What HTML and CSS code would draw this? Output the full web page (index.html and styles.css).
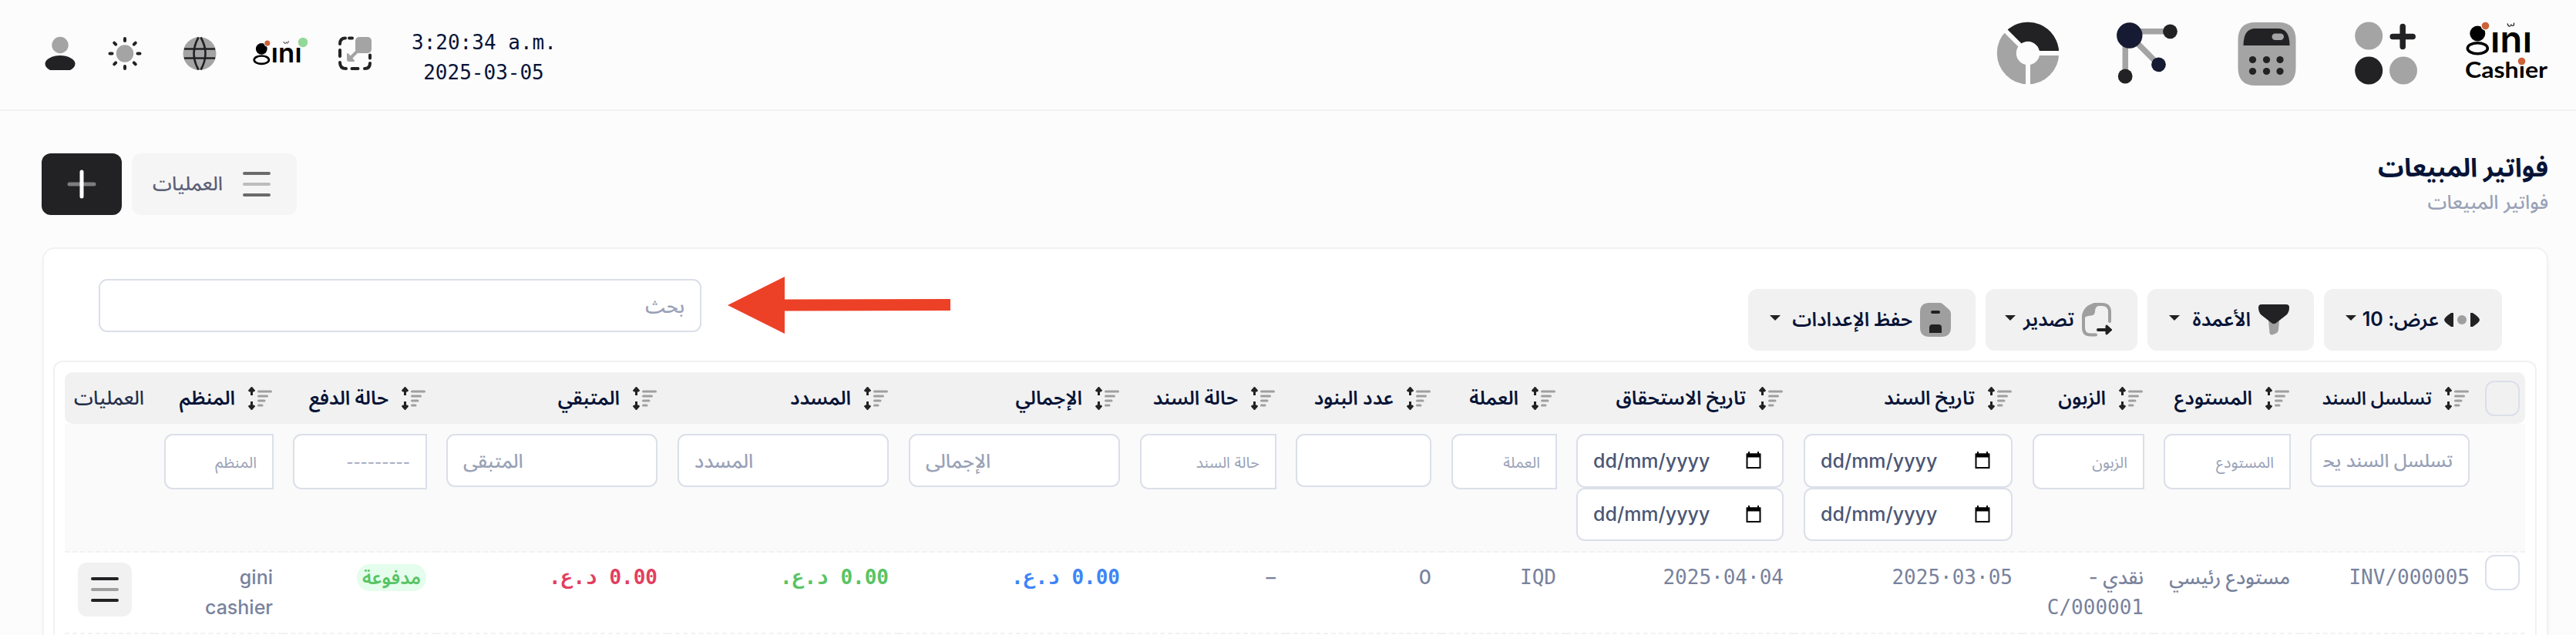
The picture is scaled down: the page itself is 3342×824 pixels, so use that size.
FILE: index.html
```html
<!DOCTYPE html>
<html lang="ar" dir="rtl">
<head>
	<meta charset="utf-8">
	<title>فواتير المبيعات</title>
	<link rel="stylesheet" href="styles.css">
</head>
<body>

<!-- shared icons -->
<svg class="sprite">
	<symbol id="i-sort" viewBox="0 0 32 32">
		<path d="M5 4v8M5 20v8" stroke="#222224" stroke-width="3"/>
		<path d="M5 1L9 5.500Q9 7 7.500 7H2.500Q1 7 1 5.500zM5 31L9 26.500Q9 25 7.500 25H2.500Q1 25 1 26.500z" fill="#222224" stroke="#222224"/>
		<path d="M14 7h16M14 13h11M14 19h7.500M14 25h4.500" stroke="#9f9f9f" stroke-width="3" stroke-linecap="round"/>
	</symbol>
	<symbol id="i-menu" viewBox="0 0 36 32">
		<path d="M2 2h32M2 30h32" stroke="#222224" stroke-width="4" stroke-linecap="round"/>
		<path d="M2 16h32" stroke="#9f9f9f" stroke-width="4" stroke-linecap="round"/>
	</symbol>
	<symbol id="i-date" viewBox="0 0 20 23">
		<path d="M1.500 3.500h17v17.500h-17z" fill="none" stroke="#000" stroke-width="2"/>
		<path d="M1 2.500h18v5H1zM3 0h2v3H3zM15 0h2v3h-2z" fill="#000"/>
	</symbol>
	<symbol id="i-gini" viewBox="0 0 107 48">
		<circle cx="15.300" cy="15.500" r="10"/>
		<circle cx="25.500" cy="5.500" r="6" fill="#fcfcfc"/>
		<circle cx="25.500" cy="5.500" r="4.800" fill="#cd6238"/>
		<ellipse cx="15.300" cy="34.700" rx="13" ry="7" fill="none" stroke="#000" stroke-width="3.600"/>
		<path d="M54 2.500q1 4 3.500 3.500q1.500-.5 1-2.500q.5 2 2.500 2q2-.500 1.500-4" fill="none" stroke="#222" stroke-width="1.200"/>
		<text class="gini-txt" x="32" y="39.500" textLength="54">ını</text>
	</symbol>
</svg>

<header class="topbar">
	<div class="topbar__nav">
		<svg class="brand" width="107" height="82" viewBox="0 0 107 82">
			<use href="#i-gini" width="107" height="48"/>
			<text class="brand__txt" x="-1" y="73" textLength="107" lengthAdjust="spacingAndGlyphs">Cashıer</text>
			<circle cx="72.500" cy="51.500" r="4.800" fill="#cd6238"/>
		</svg>
		<svg width="82" height="82" viewBox="0 0 82 82">
			<circle cx="18.200" cy="18.500" r="18" fill="#a4a4a4"/>
			<circle cx="18.200" cy="63.500" r="18" fill="#222224"/>
			<circle cx="63" cy="63.500" r="18" fill="#a4a4a4"/>
			<path d="M62.200 6.500v26M49.200 19.500h26" stroke="#222224" stroke-width="7.500" stroke-linecap="round"/>
		</svg>
		<svg width="82" height="84" viewBox="0 0 82 84">
			<path d="M3.500 24Q3.500 1 26 1h30q22.500 0 22.500 23v36q0 23-22.500 23H26Q3.500 83 3.500 60z" fill="#a4a4a4"/>
			<path d="M10.500 31Q10.500 9 26 9h29q15.500 0 15.500 22z" fill="#222224"/>
			<rect x="47.500" y="15.500" width="15.500" height="8.500" rx="4.200" fill="#a4a4a4"/>
			<g fill="#222224">
				<circle cx="22.500" cy="49.500" r="4.600"/><circle cx="40.500" cy="49.500" r="4.600"/><circle cx="58" cy="49.500" r="4.600"/>
				<circle cx="22.500" cy="64.500" r="4.600"/><circle cx="40.500" cy="64.500" r="4.600"/><circle cx="58" cy="64.500" r="4.600"/>
			</g>
		</svg>
		<svg width="82" height="82" viewBox="0 0 82 82">
			<path d="M17.800 12.800H70M12.300 18v53M17.800 18l37.700 37.800" stroke="#a4a4a4" stroke-width="7.500"/>
			<circle cx="17.800" cy="18" r="16.700" fill="#161b33"/>
			<circle cx="70.500" cy="12.800" r="9.400" fill="#222224"/>
			<circle cx="55.500" cy="55.800" r="9.400" fill="#161b33"/>
			<circle cx="12.200" cy="71" r="9.400" fill="#222224"/>
		</svg>
		<svg width="82" height="82" viewBox="0 0 82 82">
			<circle cx="41" cy="41" r="27.700" fill="none" stroke="#a4a4a4" stroke-width="25"/>
			<path d="M21.400 21.400A27.700 27.700 0 0 1 68.700 41" fill="none" stroke="#222224" stroke-width="25"/>
			<path d="M41 41L9 9M41 41h41M41 41v41" stroke="#fcfcfc" stroke-width="6"/>
		</svg>
	</div>

	<div class="topbar__tools">
		<div class="clock">
			<div dir="ltr">3:20:34 a.m.</div>
			<div dir="ltr">2025-03-05</div>
		</div>
		<svg class="tool-scan" width="44" height="44" viewBox="0 0 44 44">
			<path d="M2 10Q2 2.500 9 2.500M14 2.500h4M2 18v8M2 34q0 8 8 8M17.500 42h8M34 42q7 0 7-7M41 24.500v4" fill="none" stroke="#222224" stroke-width="4" stroke-linecap="round"/>
			<rect x="22" y="1" width="21" height="21" rx="5" fill="#a4a4a4"/>
			<path d="M25 19l-9 9" stroke="#a4a4a4" stroke-width="4"/>
			<path d="M12 23v7q0 2 2 2h6z" fill="#a4a4a4" stroke="#a4a4a4" stroke-width="2" stroke-linejoin="round"/>
		</svg>
		<svg class="tool-gini" width="74" height="44" viewBox="0 0 74 44">
			<use href="#i-gini" x="1" y="5" width="79" height="35.500"/>
			<circle cx="66" cy="8" r="6.200" fill="#92d896"/>
		</svg>
		<svg class="tool-lang" width="44" height="44" viewBox="0 0 44 44">
			<circle cx="22" cy="22.500" r="21.500" fill="#a4a4a4"/>
			<path d="M2 16.500h40M2 28.500h40" stroke="#222224" stroke-width="2.400"/>
			<path d="M20.500 1.500q-12 21 0 42M23.500 1.500q12 21 0 42" fill="none" stroke="#222224" stroke-width="2.600"/>
		</svg>
		<svg class="tool-theme" width="44" height="44" viewBox="0 0 44 44">
			<circle cx="22" cy="22.500" r="11.200" fill="#a4a4a4"/>
			<path d="M22 3v3M22 39v3M2.500 22.500h3M38.500 22.500h3M8.200 8.700l2 2M33.800 34.300l2 2M8.200 36.300l2-2M33.800 10.700l2-2" stroke="#222224" stroke-width="4" stroke-linecap="round"/>
		</svg>
		<svg width="44" height="44" viewBox="0 0 44 44">
			<circle cx="22" cy="11.500" r="10.700" fill="#a4a4a4"/>
			<path d="M9 44Q2.500 41 2.500 35.500C2.500 30 12 25 22 25s19.500 5 19.500 10.500Q41.500 41 35 44z" fill="#222224"/>
		</svg>
	</div>
</header>

<main class="page">
	<div class="page-head">
		<div class="page-head__titles">
			<h1>فواتير المبيعات</h1>
			<div class="page-head__crumb">فواتير المبيعات</div>
		</div>
		<div class="page-head__actions">
			<a class="btn-ops">
				<svg width="36" height="32"><use href="#i-menu"/></svg>
				<span>العمليات</span>
			</a>
			<a class="btn-add">
				<svg width="38" height="38" viewBox="0 0 38 38">
					<path d="M3 19h32" stroke="#7d7d7e" stroke-width="5" stroke-linecap="round"/>
					<path d="M19 3v32" stroke="#fff" stroke-width="5" stroke-linecap="round"/>
				</svg>
			</a>
		</div>
	</div>

	<section class="card">
		<div class="toolbar">
			<div class="toolbar__buttons">
				<button class="tbtn tbtn_show">
					<svg width="46" height="20" viewBox="0 0 46 20">
						<path d="M12 1v18H9Q0 13 0 10T9 1zM34 1v18h3q9-6 9-9t-9-9z" fill="#222224"/>
						<circle cx="23" cy="10" r="6" fill="#9f9f9f"/>
					</svg>
					<span>عرض: 10</span>
					<i class="caret"></i>
				</button>
				<button class="tbtn tbtn_columns">
					<svg width="40" height="42" viewBox="0 0 40 42">
						<path d="M13 22h14l-1 12q-.500 3-3 4.500l-5 2q-3 .500-3.500-2.500z" fill="#9f9f9f"/>
						<path d="M4 1h32q4 0 4 4 0 6-3.500 9.500L23 25q-3 2.500-6 0L3.500 14.500Q0 11 0 5q0-4 4-4z" fill="#222224"/>
					</svg>
					<span>الأعمدة</span>
					<i class="caret"></i>
				</button>
				<button class="tbtn tbtn_export">
					<svg width="40" height="44" viewBox="0 0 40 44">
						<path d="M2 17v15q0 9.500 9 9.500h7M16 2h10q10 0 10 10v12" fill="none" stroke="#9f9f9f" stroke-width="4" stroke-linecap="round"/>
						<path d="M0 17Q2 3 17 0h9l-2 3q-7 1-7 8 0 5-5 5.500Q4 17 3 20z" fill="#9f9f9f"/>
						<path d="M21 35h11" stroke="#222224" stroke-width="4" stroke-linecap="round"/>
						<path d="M31 29.500q1-1 2 0l6 5.500-6 5.500q-1 1-2 0z" fill="#222224" stroke="#222224"/>
					</svg>
					<span>تصدير</span>
					<i class="caret"></i>
				</button>
				<button class="tbtn tbtn_save">
					<svg width="40" height="44" viewBox="0 0 40 44">
						<path d="M12 0h14q2 0 4 2l8 7q2 2 2 5v18q0 12-12 12H12Q0 44 0 32V12Q0 0 12 0z" fill="#9f9f9f"/>
						<rect x="14" y="10" width="12" height="4" rx="2" fill="#222224"/>
						<path d="M12 39v-7q0-4 4-4h8q4 0 4 4v7z" fill="#222224"/>
					</svg>
					<span>حفظ الإعدادات</span>
					<i class="caret"></i>
				</button>
			</div>
			<div class="search">
				<div class="field">بحث</div>
				<svg class="pointer" width="290" height="76" viewBox="0 0 290 76">
					<path d="M0 38L74 1v29.500l215-.500v15l-215 .500V75z" fill="#ec4127"/>
				</svg>
			</div>
		</div>

		<div class="table-box">
			<table class="grid">
				<colgroup>
					<col class="c-check"><col class="c-serial"><col class="c-store"><col class="c-client">
					<col class="c-date"><col class="c-due"><col class="c-cur"><col class="c-items"><col class="c-items">
					<col class="c-money"><col class="c-money"><col class="c-money">
					<col class="c-pay"><col class="c-user"><col class="c-ops">
				</colgroup>
				<tr class="grid__head">
					<th><i class="check"></i></th>
					<th><div class="th th_serial"><svg><use href="#i-sort"/></svg><span>تسلسل السند</span></div></th>
					<th><div class="th"><svg><use href="#i-sort"/></svg><span>المستودع</span></div></th>
					<th><div class="th"><svg><use href="#i-sort"/></svg><span>الزبون</span></div></th>
					<th><div class="th"><svg><use href="#i-sort"/></svg><span>تاريخ السند</span></div></th>
					<th><div class="th"><svg><use href="#i-sort"/></svg><span>تاريخ الاستحقاق</span></div></th>
					<th><div class="th"><svg><use href="#i-sort"/></svg><span>العملة</span></div></th>
					<th><div class="th"><svg><use href="#i-sort"/></svg><span>عدد البنود</span></div></th>
					<th><div class="th"><svg><use href="#i-sort"/></svg><span>حالة السند</span></div></th>
					<th><div class="th"><svg><use href="#i-sort"/></svg><span>الإجمالي</span></div></th>
					<th><div class="th"><svg><use href="#i-sort"/></svg><span>المسدد</span></div></th>
					<th><div class="th"><svg><use href="#i-sort"/></svg><span>المتبقي</span></div></th>
					<th><div class="th"><svg><use href="#i-sort"/></svg><span>حالة الدفع</span></div></th>
					<th><div class="th"><svg><use href="#i-sort"/></svg><span>المنظم</span></div></th>
					<th><div class="th th_plain">العمليات</div></th>
				</tr>
				<tr class="grid__filter">
					<td></td>
					<td><div class="field field_serial">تسلسل السند يح&zwj;</div></td>
					<td><div class="select">المستودع</div></td>
					<td><div class="select">الزبون</div></td>
					<td>
						<div class="field field_date">dd/mm/yyyy<svg><use href="#i-date"/></svg></div>
						<div class="field field_date">dd/mm/yyyy<svg><use href="#i-date"/></svg></div>
					</td>
					<td>
						<div class="field field_date">dd/mm/yyyy<svg><use href="#i-date"/></svg></div>
						<div class="field field_date">dd/mm/yyyy<svg><use href="#i-date"/></svg></div>
					</td>
					<td><div class="select">العملة</div></td>
					<td><div class="field"></div></td>
					<td><div class="select">حالة السند</div></td>
					<td><div class="field field_num">الإجمالى</div></td>
					<td><div class="field field_num">المسدد</div></td>
					<td><div class="field field_num">المتبقى</div></td>
					<td><div class="select">---------</div></td>
					<td><div class="select">المنظم</div></td>
					<td></td>
				</tr>
				<tr class="grid__row">
					<td><i class="check"></i></td>
					<td class="mono">INV/000005</td>
					<td>مستودع رئيسي</td>
					<td>نقدي - <span class="mono">C/000001</span></td>
					<td class="mono"><bdi dir="ltr">2025·03·05</bdi></td>
					<td class="mono"><bdi dir="ltr">2025·04·04</bdi></td>
					<td class="mono">IQD</td>
					<td>0</td>
					<td>–</td>
					<td class="mono money money_blue"><bdi dir="rtl">0.00 د.ع.</bdi></td>
					<td class="mono money money_green"><bdi dir="rtl">0.00 د.ع.</bdi></td>
					<td class="mono money money_red"><bdi dir="rtl">0.00 د.ع.</bdi></td>
					<td><span class="badge">مدفوعة</span></td>
					<td>gini<br>cashier</td>
					<td><a class="row-menu"><svg width="36" height="32"><use href="#i-menu"/></svg></a></td>
				</tr>
			</table>
		</div>
	</section>
</main>

</body>
</html>
```
FILE: styles.css
```css
* {
	box-sizing: border-box;
}

body {
	margin: 0;
	height: 824px;
	overflow: hidden;
	display: flex;
	flex-direction: column;
	color: #071437;
	font-size: 25px;
	font-family: Inter, "Noto Sans Arabic", "DejaVu Sans", sans-serif;
	background-color: #fcfcfc;
}

svg {
	display: block;
	flex: none;
	direction: ltr;
}

.sprite { display: none; }

.gini-txt {
	font: 600 47px Inter, sans-serif;
}


.topbar {
	height: 144px;
	flex: none;
	display: flex;
	justify-content: space-between;
	padding: 0 36px 0 56px;
	border-bottom: 2px solid #f1f1f1;
}
	.topbar__nav {
		display: flex;
		gap: 73px;
		padding-top: 28px;
	}
		.brand { margin-left: -11px; }
		.brand__txt { font: 700 29px Lato, sans-serif; }

	.topbar__tools {
		display: flex;
		padding-top: 47px;
	}
		.clock {
			width: 187px;
			margin: -11px 0 0 51px;
			font: 26px/39px "DejaVu Sans Mono", monospace;
			text-align: center;
			white-space: nowrap;
		}
		.tool-scan { margin-left: 38px; }
		.tool-gini { margin-left: 46px; }
		.tool-lang { margin-left: 53px; }
		.tool-theme { margin-left: 40px; }


.page {
	flex: 1;
	min-height: 0;
	display: flex;
	flex-direction: column;
	padding: 55px 36px 0 54px;
}

.page-head {
	height: 80px;
	flex: none;
	display: flex;
	justify-content: space-between;
	margin-bottom: 42px;
}
	.page-head h1 {
		margin: 0;
		font-size: 33.3px;
		line-height: 37px;
	}
	.page-head__crumb {
		color: #99a1b7;
		font-size: 25px;
		font-weight: 500;
		line-height: 52px;
	}
	.page-head__actions {
		display: flex;
		gap: 13px;
	}

.btn-ops {
	width: 214px;
	display: flex;
	align-items: center;
	gap: 26px;
	padding-right: 34px;
	color: #5b6078;
	font-weight: 500;
	border-radius: 12px;
	background-color: #f5f5f5;
}
	.btn-ops svg { opacity: .65; }

.btn-add {
	width: 104px;
	display: flex;
	align-items: center;
	justify-content: center;
	border-radius: 12px;
	background-color: #222224;
}


.card {
	flex: 1;
	min-height: 0;
	display: flex;
	flex-direction: column;
	margin-left: 1px;
	border: 2px solid #f1f1f1;
	border-bottom: 0;
	border-radius: 16px 16px 0 0;
	background-color: #fff;
	box-shadow: 0 3px 4px rgba(0,0,0,.03);
}

.toolbar {
	flex: none;
	display: flex;
	justify-content: space-between;
	padding: 39px 58px 13px 71px;
}
	.toolbar__buttons {
		display: flex;
		gap: 13px;
		padding-top: 13px;
	}

.tbtn {
	height: 80px;
	display: flex;
	align-items: center;
	gap: 10px;
	padding: 0 32px 0 28px;
	border: 0;
	border-radius: 12px;
	color: #071437;
	font: 600 25px Inter, "Noto Sans Arabic", "DejaVu Sans", sans-serif;
	white-space: nowrap;
	background-color: #f1f1f1;
}
	.tbtn span {
		flex: 1;
		text-align: right;
	}
	.tbtn_show { width: 231px; padding-right: 29px; gap: 7px; }
	.tbtn_columns { width: 216px; }
	.tbtn_export { width: 197px; }
	.tbtn_save { width: 295px; }

.caret {
	margin-top: -6px;
	border: 7px solid transparent;
	border-top-color: #222224;
	border-bottom: 0;
}

.search {
	width: 782px;
	position: relative;
}
	/* arrow lies over the free space beside the search box */
	.pointer {
		top: -4px;
		left: 816px;
		position: absolute;
	}


.field,
.select {
	height: 69px;
	padding: 0 20px;
	border: 2px solid #dbdfe9;
	border-radius: 11px;
	color: #99a1b7;
	font-size: 25px;
	font-weight: 500;
	line-height: 66px;
	white-space: nowrap;
	background-color: #fff;
}
	.field_num { text-align: left; }
	.field_serial { font-size: 24px; }

	.field_date {
		height: 69.5px;
		display: flex;
		justify-content: space-between;
		align-items: center;
		padding-right: 27px;
		direction: ltr;
		color: #4b5675;
	}
		.field_date svg {
			width: 20px;
			height: 23px;
		}

	.select {
		height: 72px;
		margin-right: -1px;
		font-size: 20px;
		font-weight: 400;
		line-height: 70px;
		border-radius: 11px 0 0 11px;
	}


.table-box {
	flex: 1;
	min-height: 0;
	margin: 0 13px 0 12px;
	padding: 13px 13px 0;
	border: 2px solid #f1f1f1;
	border-bottom: 0;
	border-radius: 12px 12px 0 0;
}

.grid {
	width: 3192px;
	table-layout: fixed;
	border-spacing: 0;
}
	.grid td,
	.grid th {
		padding: 13px;
		vertical-align: top;
		text-align: right;
	}

	.c-check { width: 59px; }
	.c-serial { width: 233px; }
	.c-store { width: 190px; }
	.c-client { width: 170px; }
	.c-date { width: 297px; }
	.c-due { width: 295px; }
	.c-cur { width: 162px; }
	.c-items { width: 202px; }
	.c-money { width: 300px; }
	.c-pay { width: 199px; }
	.c-user { width: 167px; }
	.c-ops { width: 116px; }

	.grid__head th {
		height: 67px;
		padding: 0 13px;
		vertical-align: middle;
		background-color: #f1f1f1;
	}
		.grid__head th:first-child { border-radius: 0 10px 10px 0; }
		.grid__head th:last-child { border-radius: 10px 0 0 10px; }

	.th {
		display: flex;
		align-items: center;
		gap: 16px;
		font-size: 25px;
		font-weight: 600;
		line-height: 39px;
		white-space: nowrap;
	}
		.th svg {
			width: 33px;
			height: 32px;
		}
		.th_serial { font-size: 23.7px; }
		.th_plain {
			color: #252f4a;
			font-weight: 500;
		}

	.grid__filter td {
		height: 167px;
		background-color: #fafafa;
		border-bottom: 2px dashed #f1f1f1;
	}

	.grid__row td {
		height: 106px;
		color: #78829d;
		font-weight: 500;
		line-height: 39px;
		border-bottom: 2px dashed #f1f1f1;
	}

	.grid .check {
		width: 45px;
		height: 46px;
		display: block;
		border: 2px solid #dbdfe9;
		border-radius: 12px;
	}
	.grid th:first-child,
	.grid .grid__row td:first-child { padding: 3px 7px; }
	.grid th:first-child { padding: 0 7px; }

	.grid .mono {
		font-family: "DejaVu Sans Mono", monospace;
		font-size: 26px;
		font-weight: 400;
	}
	.grid .money {
		font-weight: 700;
		white-space: nowrap;
	}
		.grid .money_blue { color: #3e85f7; }
		.grid .money_green { color: #57c463; }
		.grid .money_red { color: #e23f5f; }

.badge {
	display: inline-block;
	padding: 0 7px;
	border-radius: 17px;
	color: #57c463;
	font-size: 24px;
	font-weight: 600;
	line-height: 35px;
	background-color: #e4fdec;
}

.row-menu {
	width: 70px;
	height: 70px;
	display: flex;
	align-items: center;
	justify-content: center;
	margin-right: 16px;
	border-radius: 12px;
	background-color: #f1f1f1;
}
```
